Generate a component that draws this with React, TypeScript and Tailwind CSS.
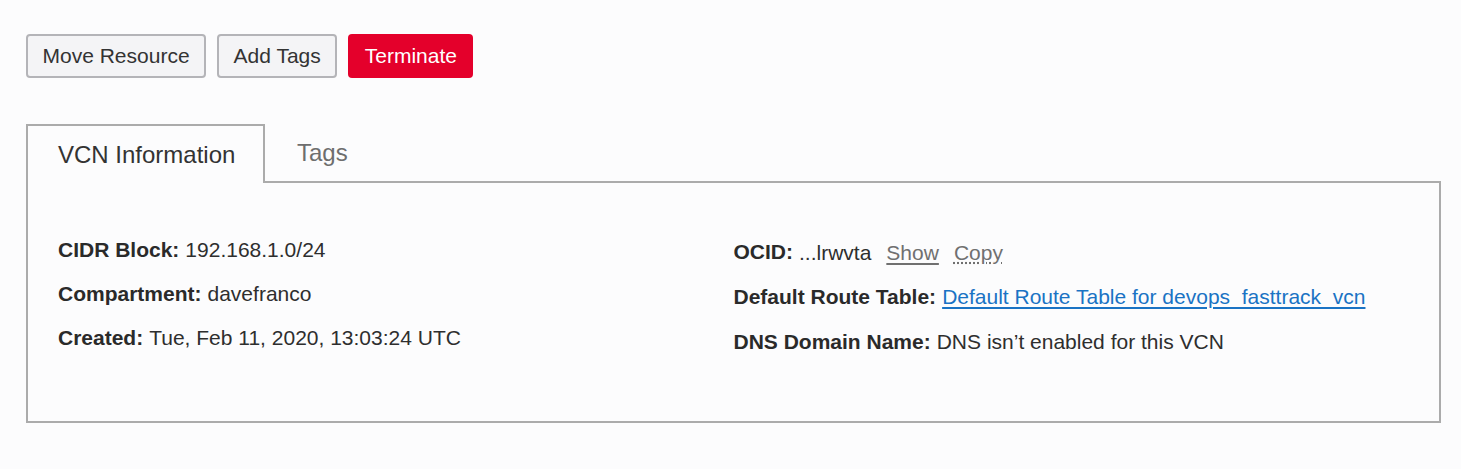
import React from "react";

const font = { fontFamily: '"Liberation Sans", Arial, sans-serif' };

function Field({ label, tall, children }: { label: string; tall?: boolean; children: React.ReactNode }) {
  return (
    <div
      className={`flex items-center whitespace-nowrap text-[21px] text-[#2e2e2e] ${tall ? "h-[45px]" : "h-[44px]"}`}
    >
      <span className="font-bold text-[#2a2a2a]">{label}</span>
      <span className="ml-[6px]">{children}</span>
    </div>
  );
}

export default function App() {
  return (
    <div className="min-h-[469px] w-[1461px] bg-[#fcfcfd] pl-[26px] pt-[34px]" style={font}>
      {/* Actions */}
      <div className="flex gap-[11px]">
        <button className="h-[44px] rounded-[4px] border-2 border-[#b4b4b8] bg-[#f4f4f6] px-[14.5px] text-[21px] text-[#333]">
          Move Resource
        </button>
        <button className="h-[44px] rounded-[4px] border-2 border-[#b4b4b8] bg-[#f4f4f6] px-[14.5px] text-[21px] text-[#333]">
          Add Tags
        </button>
        <button className="h-[44px] rounded-[4px] bg-[#e4002b] px-[16.5px] text-[21px] text-white">
          Terminate
        </button>
      </div>

      {/* Tabs */}
      <div className="mt-[46px] w-[1415px]">
        <div className="flex h-[57px] items-end">
          <div className="relative z-10 -mb-[2px] flex h-[59px] w-[239px] items-center border-2 border-b-0 border-[#ababab] bg-[#fcfcfd] pl-[30px] text-[24px] text-[#333]">
            VCN Information
          </div>
          <div className="flex h-[57px] items-center pl-[32px] text-[24px] text-[#6e6e6e]">Tags</div>
        </div>
        <div className="grid h-[242px] grid-cols-2 border-2 border-[#ababab] px-[30px] pt-[45px]">
          <div>
            <Field label="CIDR Block:">192.168.1.0/24</Field>
            <Field label="Compartment:">davefranco</Field>
            <Field label="Created:">Tue, Feb 11, 2020, 13:03:24 UTC</Field>
          </div>
          <div className="pt-[1px]">
            <Field label="OCID:" tall>
              <span className="relative top-[1px]">...lrwvta</span>
              <a className="relative top-[1px] ml-[15px] text-[#707070] underline underline-offset-[3px]">Show</a>
              <a className="relative top-[1px] ml-[15px] text-[#707070] underline decoration-dotted underline-offset-[3px]">Copy</a>
            </Field>
            <Field label="Default Route Table:" tall>
              <a className="text-[#1a73c4] underline underline-offset-[3px]">Default Route Table for devops_fasttrack_vcn</a>
            </Field>
            <Field label="DNS Domain Name:" tall>
              DNS isn’t enabled for this VCN
            </Field>
          </div>
        </div>
      </div>
    </div>
  );
}
